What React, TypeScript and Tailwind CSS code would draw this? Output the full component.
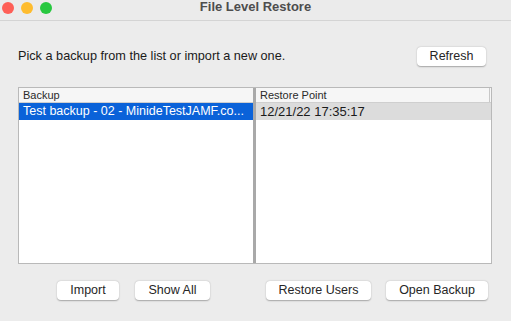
import React from 'react';

const font = { fontFamily: '"Liberation Sans", Arial, sans-serif' };

function MacButton({ label, w }: { label: string; w: string }) {
  return (
    <button
      className={`block h-[19px] ${w} rounded-[4px] bg-white text-[12.5px] text-[#262626] shadow-[0_0.5px_1.5px_rgba(0,0,0,0.3)] leading-none`}
    >
      {label}
    </button>
  );
}

export default function App() {
  return (
    <div className="w-[511px] h-[321px] bg-[#ececec] flex flex-col overflow-hidden" style={font}>
      {/* Title bar */}
      <div className="h-[21px] shrink-0 grid grid-cols-[1fr_auto_1fr] items-center border-b border-[#d4d4d4] bg-[#ebebeb]">
        <div className="flex items-center gap-[7px] pl-[2px] -mt-[5px]">
          <span className="w-[12px] h-[12px] rounded-full bg-[#fe5f57]" />
          <span className="w-[12px] h-[12px] rounded-full bg-[#febc2e]" />
          <span className="w-[12px] h-[12px] rounded-full bg-[#28c840]" />
        </div>
        <div className="text-[13px] font-bold text-[#4d4d4d] -mt-[6px]">File Level Restore</div>
        <div />
      </div>

      {/* Prompt + refresh */}
      <div className="flex items-center justify-between pl-[18px] pr-[25px] mt-[26px]">
        <span className="text-[12.7px] text-[#1a1a1a]">Pick a backup from the list or import a new one.</span>
        <MacButton label="Refresh" w="w-[69px]" />
      </div>

      {/* Table */}
      <div className="ml-[18px] mr-[19px] mt-[21px] h-[177px] flex border border-[#b9b9b9] bg-white">
        <div className="w-[234px] flex flex-col">
          <div className="h-[15px] bg-[#f6f6f6] border-b border-[#cfcfcf] text-[11px] text-[#2a2a2a] pl-[4px] leading-[15px]">
            Backup
          </div>
          <div className="h-[17px] bg-[#0a62d9] text-white text-[12.5px] pl-[4px] leading-[17px] whitespace-nowrap">
            Test backup - 02 - MinideTestJAMF.co...
          </div>
        </div>
        <div className="w-[3px] bg-[#a9a9a9]" />
        <div className="flex-1 flex flex-col">
          <div className="h-[15px] bg-[#f6f6f6] border-b border-[#cfcfcf] text-[11px] text-[#2a2a2a] pl-[4px] leading-[15px] flex">
            <span className="flex-1">Restore Point</span>
            <span className="w-[1px] bg-[#c8c8c8] mr-[1px]" />
          </div>
          <div className="h-[17px] bg-[#dcdcdc] text-[#1a1a1a] text-[13px] pl-[4px] leading-[17px]">
            12/21/22 17:35:17
          </div>
        </div>
      </div>

      {/* Buttons */}
      <div className="flex items-center mt-[17px]">
        <div className="ml-[57px]"><MacButton label="Import" w="w-[62px]" /></div>
        <div className="ml-[16px]"><MacButton label="Show All" w="w-[75px]" /></div>
        <div className="ml-[56px]"><MacButton label="Restore Users" w="w-[105px]" /></div>
        <div className="ml-[15px]"><MacButton label="Open Backup" w="w-[102px]" /></div>
      </div>
    </div>
  );
}
